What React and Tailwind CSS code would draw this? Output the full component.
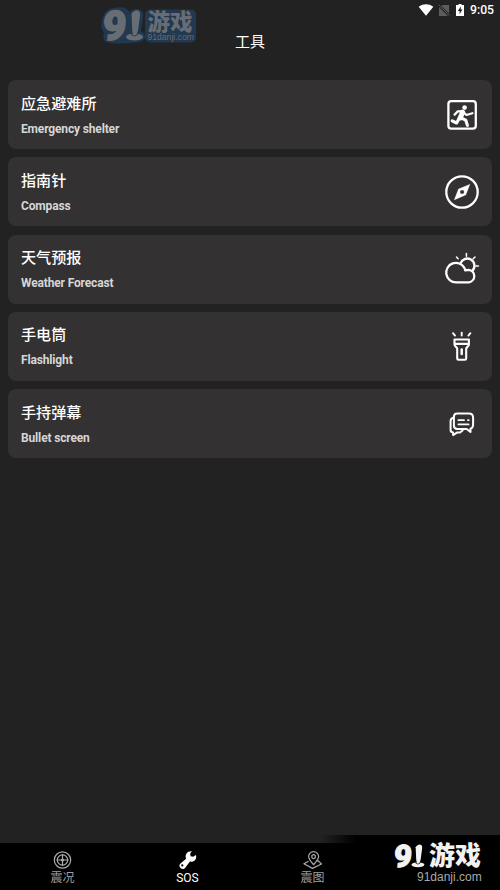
import React, { useState } from 'react';

const ShelterIcon = () => (
    <svg viewBox="0 0 36 36" className="w-9 h-9" fill="none" stroke="#fff" strokeLinecap="round" strokeLinejoin="round">
        <rect x="4.4" y="4.2" width="27.4" height="27.4" rx="2.8" strokeWidth="2.3" />
        <circle cx="20.6" cy="10.6" r="2.3" fill="#fff" stroke="none" />
        <path d="M18.6 15.2L16.2 21" strokeWidth="5" />
        <path d="M10.6 17.6l3.2-3.2 4.6-.2 4 3.8 6-1.8" strokeWidth="2.2" />
        <path d="M15.2 21.2l-2.6 4.8-4.4-2.2M17 20.8l4.8 2.4 1.6 5.2" strokeWidth="3.1" />
    </svg>
);

const CompassIcon = () => (
    <svg viewBox="0 0 36 36" className="w-9 h-9" fill="none" stroke="#fff">
        <circle cx="18" cy="18" r="15.7" strokeWidth="2.3" />
        <path fillRule="evenodd" fill="#fff" d="M26 10.2L21.8 21 10.2 25.9 14.4 15zM18.1 15.9a2.1 2.1 0 1 0 0 4.2 2.1 2.1 0 0 0 0-4.2z" strokeWidth=".2" />
    </svg>
);

const WeatherIcon = () => (
    <svg viewBox="0 0 36 36" className="w-9 h-9" fill="none" stroke="#fff" strokeLinecap="round" strokeLinejoin="round">
        <path d="M12 31.3a9.7 9.7 0 1 1 8.4-14.4q.8 1.2.8 2.5 1.6-.6 3.4-.6a6.3 6.3 0 0 1 .3 12.5z" strokeWidth="2.3" />
        <path d="M16.4 12.6a7.2 7.2 0 1 1 12.2 7" strokeWidth="2.3" />
        <path d="M12.5 6l1.6 1.7M22.4 2.6v2.6M31 6l-1.8 1.8M32 15h2.4" strokeWidth="1.5" />
    </svg>
);

const FlashlightIcon = () => (
    <svg viewBox="0 0 36 36" className="w-9 h-9" fill="none" stroke="#fff" strokeLinecap="round" strokeLinejoin="round">
        <path d="M10.5 11.5h14.4v5c0 2.2-2.7 2.5-2.7 4.3v9.6q0 1.3-1.3 1.3h-6.4q-1.3 0-1.3-1.3v-9.6c0-1.8-2.7-2.1-2.7-4.3zM10.5 15.9h14.4" strokeWidth="2.1" />
        <path d="M17.7 21.4v4.7" strokeWidth="2.5" />
        <path d="M9 5.2l2 2.4M17.7 4.6v3M26.4 5.2l-2 2.4" strokeWidth="1.9" />
    </svg>
);

const BulletIcon = () => (
    <svg viewBox="0 0 36 36" className="w-9 h-9" fill="none" stroke="#fff" strokeLinecap="round" strokeLinejoin="round">
        <path d="M13.3 7.5h11.6q4.2 0 4.2 4.2v6.8q0 3.4-2.6 4.3v3.2l-3.8-3h-9.4q-3.4 0-3.4-3.4v-8.7q0-3.4 3.4-3.4z" strokeWidth="2" />
        <path d="M9 11.8q-2.4.9-2.4 3.3v8.9q0 2.2 2.5 2.4v2.7l4.2-2.7 2.7.1 2.6-2" strokeWidth="2" />
        <path d="M14.4 14.2h5.6M24 14.2h.7M14.4 18.4h10.2" strokeWidth="1.8" />
    </svg>
);

const QuakeIcon = () => (
    <svg viewBox="0 0 20 20" className="w-5 h-5" fill="none" stroke="#aaa" strokeWidth="1.2">
        <circle cx="9.5" cy="10" r="8.2" />
        <circle cx="9.5" cy="10" r="5.2" />
        <path d="M9.5 4v12M3.5 10h12" />
        <circle cx="9.5" cy="10" r="1" fill="#aaa" />
    </svg>
);

const WrenchIcon = () => (
    <svg viewBox="0 0 20 20" className="w-5 h-5" fill="#fff">
        <path fillRule="evenodd" d="M13.9 1.2L12.2 3.6l.4 2.6 2.6.5 2.7-1.8c1.4 4.2-1.8 7.4-6 6.7l-4.4 5.8c-1.4 1.8-3.6 2-5 .6-1.6-1.5-1.4-3.5.3-4.8l5.3-4.4C6.4 4.4 9.4.8 13.9 1.2zM4.3 14.3a1.1 1.1 0 1 0 0 2.2 1.1 1.1 0 0 0 0-2.2z" />
    </svg>
);

const MapIcon = () => (
    <svg viewBox="0 0 20 20" className="w-5 h-5" fill="none" stroke="#aaa" strokeWidth="1.2" strokeLinejoin="round">
        <path d="M10.6 14.7c2.8-3.1 5-5.4 5-8.1a5 5 0 0 0-10 0c0 2.7 2.2 5 5 8.1z" />
        <path d="M10.6 4.4l1.7 1v2.3l-1.7 1-1.7-1V5.4z" />
        <path d="M5.6 11.2L.9 13.8l8.6 4.6 9-4.4-3.1-3.1-1.3.3" />
    </svg>
);

// the "9" with a pin standing next to it
const BrandMark = ({ color, outline }) => (
    <g fill={color} strokeLinejoin="round">
        {outline && (
            <path d="M2 6Q6-1 18-.5q7 1 8 6 4-6 11-3.5 3 2 1.5 8l-2 13q5 2 4 6-2 4-12 3.5Q14 34 4 32q-4-2-1.5-8Q-3 18 2 6z" fill={outline} stroke={outline} strokeWidth="2.5" />
        )}
        <text x="0" y="30.5" fontSize="41" fontWeight="900" stroke={color} strokeWidth="1.4" fontFamily="Roboto, sans-serif" transform="skewX(-4) translate(1 0)">9</text>
        <ellipse cx="31.5" cy="28" rx="8.5" ry="3.4" />
        <path d="M28.5 5c3-5 9-5 8.6 1L34.8 23c-.6 4-5.3 4-5.5 0z" />
        <path d="M29 22.5l-.2 3.4q2.6 2.4 5.4 0l.8-3.4" fill="none" stroke={outline || '#000'} strokeWidth=".9" />
    </g>
);

const tools = [
    { title: '应急避难所', subtitle: 'Emergency shelter', Icon: ShelterIcon },
    { title: '指南针', subtitle: 'Compass', Icon: CompassIcon },
    { title: '天气预报', subtitle: 'Weather Forecast', Icon: WeatherIcon },
    { title: '手电筒', subtitle: 'Flashlight', Icon: FlashlightIcon },
    { title: '手持弹幕', subtitle: 'Bullet screen', Icon: BulletIcon },
];

const tabs = [
    { id: 'quake', label: '震况', Icon: QuakeIcon },
    { id: 'sos', label: 'SOS', Icon: WrenchIcon },
    { id: 'map', label: '震图', Icon: MapIcon },
];

const StatusBar = () => (
    <div className="flex h-5 items-center justify-end pr-[6px] text-white">
        <svg viewBox="0 0 16 12" className="h-3 w-4" fill="#fff">
            <path d="M.7 2.8C5-.5 11-.5 15.3 2.8L8 11.7z" />
        </svg>
        <svg viewBox="0 0 12 12" className="ml-1 h-3 w-3" fill="#5c5c5c">
            <path d="M4.5 1H11v8.5L3.4 2zM1 3l9 9H1z" />
            <path d="M.8.8l10.6 10.6" stroke="#5c5c5c" strokeWidth="1" />
        </svg>
        <svg viewBox="0 0 8 12" className="ml-[6px] h-3 w-2" fill="#fff">
            <path fillRule="evenodd" d="M2.5 0h3v1H8v11H0V1h2.5zM4.8 2.5L1.8 7h1.8v3.2l2.8-4.7H4.8z" />
        </svg>
        <span className="ml-[6px] font-[Roboto,sans-serif] text-[12.2px] font-medium leading-5">9:05</span>
    </div>
);

const App = () => {
    const [active, setActive] = useState('sos');

    return (
        <div className="relative flex h-[890px] w-[500px] flex-col overflow-hidden bg-[#222222] font-[Roboto,'Noto_Sans_CJK_SC',sans-serif]">
            <StatusBar />
            <header className="flex h-[60px] justify-center pt-[10px]">
                <h1 className="text-[15px] leading-6 text-white">工具</h1>
            </header>

            <main className="flex flex-1 flex-col gap-[8.3px] px-2">
                {tools.map(({ title, subtitle, Icon }) => (
                    <button key={title} className="flex h-[69px] items-center justify-between rounded-lg bg-[#333132] pl-[13px] pr-3 text-left">
                        <div className="flex flex-col gap-[7px] pt-[1px]">
                            <span className="text-[15.1px] font-medium leading-5 text-white">{title}</span>
                            <span className="text-[12px] font-bold leading-4 tracking-[-0.15px] text-[#d6d6d6]">{subtitle}</span>
                        </div>
                        <Icon />
                    </button>
                ))}
            </main>

            <nav className="grid h-[47px] grid-cols-4 bg-black">
                {tabs.map(({ id, label, Icon }) => (
                    <button
                        key={id}
                        onClick={() => setActive(id)}
                        className={`flex flex-col items-center pt-[7px] text-[12px] leading-4 ${active === id ? 'text-white' : 'text-[#a0a0a0]'}`}
                    >
                        <Icon />
                        <span>{label}</span>
                    </button>
                ))}
            </nav>

            {/* brand stamps over the page */}
            <svg viewBox="0 0 104 44" className="pointer-events-none absolute left-[98px] top-[4px] h-11 w-[104px] overflow-visible">
                <rect x="47" y="5.5" width="51" height="33" rx="5" fill="#213850" />
                <g transform="translate(5 5)">
                    <BrandMark color="#686d74" outline="#213850" />
                </g>
                <g fill="#686d74">
                    <text x="49.5" y="26" fontSize="22.5" fontWeight="900" fontFamily="'Noto Sans CJK SC', sans-serif">游戏</text>
                    <text x="49.5" y="35.5" fontSize="8.6" fontFamily="'Liberation Sans', sans-serif">91danji.com</text>
                </g>
            </svg>
            <div className="pointer-events-none absolute bottom-0 right-0 h-[55px] w-[180px] bg-linear-to-r from-transparent to-black to-20%">
                <svg viewBox="0 0 180 55" className="h-full w-full overflow-visible">
                    <g transform="translate(74 8.5) scale(.76)">
                        <BrandMark color="#f2f2f2" />
                    </g>
                    <text x="109" y="30" fontSize="26" fontWeight="900" fill="#f2f2f2" fontFamily="'Noto Sans CJK SC', sans-serif">游戏</text>
                    <text x="97" y="46" fontSize="12" fill="#a8a8a8" fontFamily="'Liberation Sans', sans-serif">91danji.com</text>
                </svg>
            </div>
        </div>
    );
};

export default App;
